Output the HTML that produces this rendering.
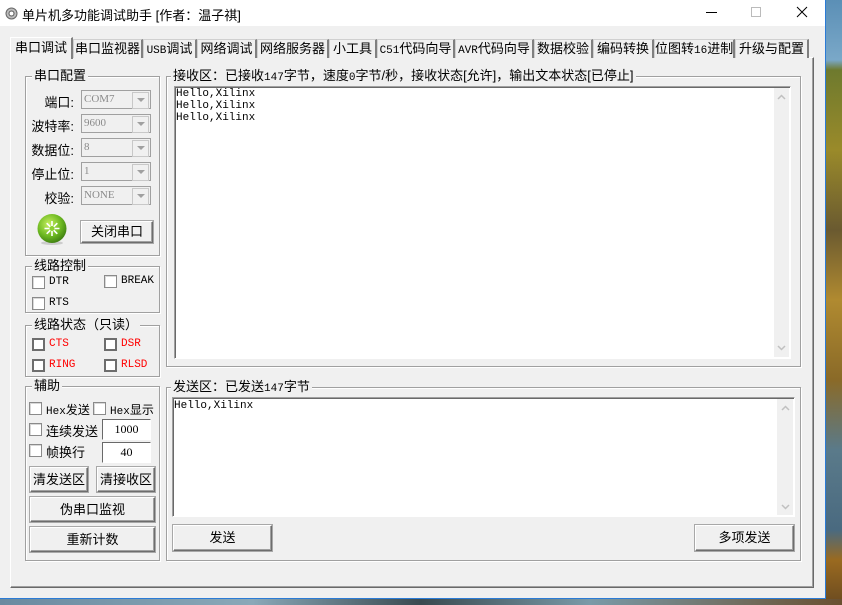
<!DOCTYPE html>
<html><head><meta charset="utf-8"><style>
*{box-sizing:border-box;margin:0;padding:0}
body{width:842px;height:605px;overflow:hidden;position:relative;background:#f0f0f0;font-family:"Liberation Sans","Noto Sans CJK SC",sans-serif;font-size:12px;color:#000}
.a{position:absolute}
.wall{position:absolute;left:826px;top:0;width:16px;height:605px;background:linear-gradient(#5b8fb6 0,#7aa8c8 60px,#6e7a2e 70px,#9a8a2a 150px,#6a5a30 230px,#b08a30 300px,#8a6a28 380px,#5a7a8a 450px,#4a6a80 530px,#9a6a20 560px,#6a4a20 605px)}
.wallb{position:absolute;left:0;top:599px;width:842px;height:6px;background:linear-gradient(90deg,#6a8aa0,#8aa8b8 30%,#3a4a50 50%,#7a9aa8 70%,#6a5030)}
.win{position:absolute;left:0;top:0;width:826px;height:599px;background:#f0f0f0;border-right:1px solid #2b7bd6;border-bottom:1px solid #2b7bd6}
.title{position:absolute;left:0;top:0;width:825px;height:26px;background:#fff}
.grp{position:absolute;border:1px solid #a0a0a0;box-shadow:inset 1px 1px 0 #fff,1px 1px 0 #fff}
.gl{position:absolute;top:-8px;left:6px;background:#f0f0f0;padding:0 2px;font-size:12px;line-height:14px}
.cb{position:absolute;width:13px;height:13px;background:#fff;border:1px solid #8a8a8a;box-shadow:inset 1px 1px 0 #d8d8d8}
.cb2{border:2px solid #6d6d6d;background:#fff;box-shadow:none}
.mono{font-family:"Liberation Mono","Noto Sans CJK SC",monospace;font-size:11px}
.red{color:#f00}
.btn{position:absolute;background:#f0f0f0;border:1px solid;border-color:#fff #6d6d6d #6d6d6d #fff;box-shadow:inset -1px -1px 0 #a0a0a0,0 0 0 1px #a8a8a8;text-align:center;font-size:13px}
.combo{position:absolute;left:81px;width:70px;height:19px;border:1px solid #a0a0a0;background:#f0f0f0;font-family:"Liberation Serif",serif;font-size:11px;color:#8a8a8a;padding-left:2px;line-height:17px}
.combo:after{content:"";position:absolute;right:1px;top:1px;width:15px;height:15px;background:#f0f0f0;border:1px solid #c8c8c8}
.combo i{position:absolute;right:5px;top:7px;width:0;height:0;border-left:4px solid transparent;border-right:4px solid transparent;border-top:4px solid #a0a0a0;z-index:2}
.lab{position:absolute;width:52px;left:22px;text-align:right;font-size:13px}
.ta{position:absolute;background:#fff;border:1px solid;border-color:#a0a0a0 #fff #fff #a0a0a0;box-shadow:inset 1px 1px 0 #696969}
.tab{position:absolute;top:39px;height:19px;border:1px solid #d0d0d0;border-bottom:none;border-right:2px solid #808080;background:#f0f0f0;text-align:center;font-size:13px;line-height:18px;white-space:nowrap}
.inp{position:absolute;left:102px;width:49px;height:21px;background:#fff;border:1px solid;border-color:#696969 #fff #fff #696969;box-shadow:0 0 0 0 #000;text-align:center;font-family:"Liberation Serif",serif;font-size:12px;line-height:19px}
.sb{position:absolute;background:#f0f0f0}
</style></head><body>
<div class="wall"></div><div class="wallb"></div>
<div class="win">
<div class="title">
 <svg class="a" style="left:5px;top:7px" width="13" height="13" viewBox="0 0 13 13"><circle cx="6.5" cy="6.5" r="5.5" fill="#bbb" stroke="#666"/><circle cx="6.5" cy="6.5" r="2.5" fill="#fff" stroke="#555"/></svg>
 <div class="a" style="left:22px;top:5px;font-size:13px">单片机多功能调试助手 [作者：温子祺]</div>
 <div class="a" style="left:706px;top:12px;width:11px;height:1px;background:#000"></div>
 <div class="a" style="left:751px;top:7px;width:10px;height:10px;border:1px solid #bbb"></div>
 <svg class="a" style="left:796px;top:6px" width="12" height="12"><path d="M1 1L11 11M11 1L1 11" stroke="#000" stroke-width="1"/></svg>
</div>
<!-- tab panel -->
<div class="a" style="left:10px;top:57px;width:804px;height:531px;border:1px solid;border-color:#fff #696969 #696969 #fff;box-shadow:inset -1px -1px 0 #a0a0a0"></div>
<div class="tab" style="left:73px;width:70px">串口监视器</div>
<div class="tab" style="left:143px;width:54px"><span class="mono">USB</span>调试</div>
<div class="tab" style="left:197px;width:60px">网络调试</div>
<div class="tab" style="left:257px;width:72px">网络服务器</div>
<div class="tab" style="left:329px;width:48px">小工具</div>
<div class="tab" style="left:377px;width:78px"><span class="mono">C51</span>代码向导</div>
<div class="tab" style="left:455px;width:79px"><span class="mono">AVR</span>代码向导</div>
<div class="tab" style="left:534px;width:59px">数据校验</div>
<div class="tab" style="left:593px;width:61px">编码转换</div>
<div class="tab" style="left:654px;width:81px">位图转<span class="mono">16</span>进制</div>
<div class="tab" style="left:735px;width:74px">升级与配置</div>
<div class="tab" style="left:10px;top:37px;height:22px;width:63px;border-color:#fff;border-right:2px solid #808080;z-index:3;line-height:20px">串口调试</div>

<!-- 串口配置 -->
<div class="grp" style="left:25px;top:76px;width:135px;height:180px"><div class="gl" style="font-size:13px">串口配置</div></div>
<div class="lab" style="top:92px">端口:</div><div class="combo" style="top:90px">COM7<i></i></div>
<div class="lab" style="top:116px">波特率:</div><div class="combo" style="top:114px">9600<i></i></div>
<div class="lab" style="top:140px">数据位:</div><div class="combo" style="top:138px">8<i></i></div>
<div class="lab" style="top:164px">停止位:</div><div class="combo" style="top:162px">1<i></i></div>
<div class="lab" style="top:188px">校验:</div><div class="combo" style="top:186px">NONE<i></i></div>
<svg class="a" style="left:36px;top:213px" width="32" height="33" viewBox="0 0 32 33"><defs><radialGradient id="g" cx="0.4" cy="0.35" r="0.7"><stop offset="0" stop-color="#c8f060"/><stop offset="0.6" stop-color="#6cb820"/><stop offset="1" stop-color="#3a7a10"/></radialGradient></defs><ellipse cx="16" cy="30" rx="11" ry="2" fill="#ccc"/><circle cx="16" cy="15.5" r="14.5" fill="url(#g)"/><g stroke="#fff" stroke-width="1.6"><path d="M16 8v15M8.5 15.5h15M10.7 10.2l10.6 10.6M21.3 10.2L10.7 20.8"/></g><circle cx="16" cy="15.5" r="2.5" fill="#8cd030"/></svg>
<div class="btn" style="left:81px;top:221px;width:72px;height:22px;line-height:20px">关闭串口</div>

<!-- 线路控制 -->
<div class="grp" style="left:25px;top:266px;width:135px;height:47px"><div class="gl" style="font-size:13px">线路控制</div></div>
<div class="cb" style="left:32px;top:276px"></div><div class="a mono" style="left:49px;top:276px">DTR</div>
<div class="cb" style="left:104px;top:275px"></div><div class="a mono" style="left:121px;top:275px">BREAK</div>
<div class="cb" style="left:32px;top:297px"></div><div class="a mono" style="left:49px;top:297px">RTS</div>

<!-- 线路状态 -->
<div class="grp" style="left:25px;top:325px;width:135px;height:52px"><div class="gl" style="font-size:13px">线路状态（只读）</div></div>
<div class="cb cb2" style="left:32px;top:338px"></div><div class="a mono red" style="left:49px;top:338px">CTS</div>
<div class="cb cb2" style="left:104px;top:338px"></div><div class="a mono red" style="left:121px;top:338px">DSR</div>
<div class="cb cb2" style="left:32px;top:359px"></div><div class="a mono red" style="left:49px;top:359px">RING</div>
<div class="cb cb2" style="left:104px;top:359px"></div><div class="a mono red" style="left:121px;top:359px">RLSD</div>

<!-- 辅助 -->
<div class="grp" style="left:25px;top:386px;width:135px;height:175px"><div class="gl" style="font-size:13px">辅助</div></div>
<div class="cb" style="left:29px;top:402px"></div><div class="a" style="left:46px;top:401px"><span class="mono">Hex</span>发送</div>
<div class="cb" style="left:93px;top:402px"></div><div class="a" style="left:110px;top:401px"><span class="mono">Hex</span>显示</div>
<div class="cb" style="left:29px;top:423px"></div><div class="a" style="left:46px;top:421px;font-size:13px">连续发送</div>
<div class="inp" style="top:419px">1000</div>
<div class="cb" style="left:29px;top:444px"></div><div class="a" style="left:46px;top:442px;font-size:13px">帧换行</div>
<div class="inp" style="top:442px">40</div>
<div class="btn" style="left:30px;top:467px;width:58px;height:25px;line-height:23px">清发送区</div>
<div class="btn" style="left:97px;top:467px;width:58px;height:25px;line-height:23px">清接收区</div>
<div class="btn" style="left:30px;top:497px;width:125px;height:25px;line-height:23px">伪串口监视</div>
<div class="btn" style="left:30px;top:527px;width:125px;height:25px;line-height:23px">重新计数</div>

<!-- 接收区 -->
<div class="grp" style="left:166px;top:76px;width:635px;height:291px"><div class="gl" style="left:4px;font-size:13px">接收区：已接收<span class="mono">147</span>字节，速度<span class="mono">0</span>字节/秒，接收状态[允许]，输出文本状态[已停止]</div></div>
<div class="ta" style="left:174px;top:86px;width:617px;height:273px"></div>
<div class="sb" style="left:774px;top:88px;width:15px;height:269px"></div>
<svg class="a" style="left:777px;top:94px" width="9" height="6"><path d="M1 5L4.5 1.5L8 5" stroke="#c0c0c0" stroke-width="1.5" fill="none"/></svg>
<svg class="a" style="left:777px;top:345px" width="9" height="6"><path d="M1 1L4.5 4.5L8 1" stroke="#c0c0c0" stroke-width="1.5" fill="none"/></svg>
<div class="a mono" style="left:176px;top:88px;line-height:12px">Hello,Xilinx<br>Hello,Xilinx<br>Hello,Xilinx</div>

<!-- 发送区 -->
<div class="grp" style="left:166px;top:387px;width:635px;height:174px"><div class="gl" style="left:4px;font-size:13px">发送区：已发送<span class="mono">147</span>字节</div></div>
<div class="ta" style="left:172px;top:397px;width:623px;height:120px"></div>
<div class="sb" style="left:777px;top:399px;width:16px;height:116px"></div>
<svg class="a" style="left:781px;top:405px" width="9" height="6"><path d="M1 5L4.5 1.5L8 5" stroke="#c0c0c0" stroke-width="1.5" fill="none"/></svg>
<svg class="a" style="left:781px;top:504px" width="9" height="6"><path d="M1 1L4.5 4.5L8 1" stroke="#c0c0c0" stroke-width="1.5" fill="none"/></svg>
<div class="a mono" style="left:174px;top:400px">Hello,Xilinx</div>
<div class="btn" style="left:173px;top:525px;width:99px;height:26px;line-height:24px">发送</div>
<div class="btn" style="left:695px;top:525px;width:99px;height:26px;line-height:24px">多项发送</div>
</div>
</body></html>
